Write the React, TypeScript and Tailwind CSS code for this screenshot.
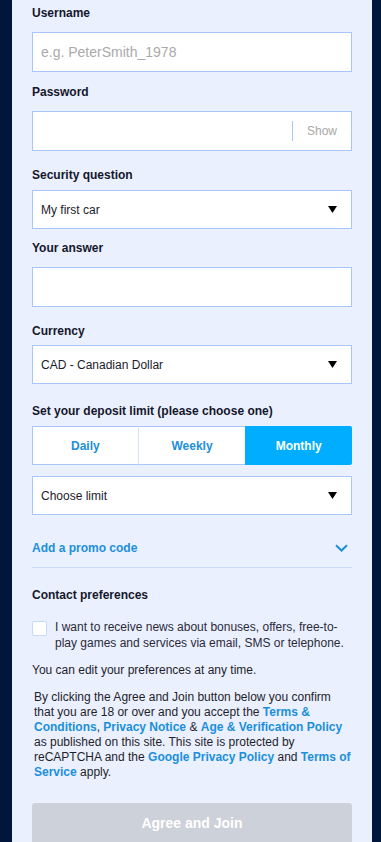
import React from "react";

const Arrow = () => (
  <svg width="9" height="7" viewBox="0 0 9 7" className="shrink-0">
    <polygon points="0,0 9,0 4.5,7" fill="#000" />
  </svg>
);

const Label = ({ children, className = "" }: { children: React.ReactNode; className?: string }) => (
  <div className={`text-[12px] leading-[14px] font-bold text-[#15172b] ${className}`}>{children}</div>
);

const Select = ({ value, className = "" }: { value: string; className?: string }) => (
  <div
    className={`h-[39px] shrink-0 bg-white border border-[#a9c6fb] flex items-center justify-between pl-[8px] pr-[14px] text-[12px] text-[#1b1b2a] ${className}`}
  >
    <span>{value}</span>
    <Arrow />
  </div>
);

const L = ({ children }: { children: React.ReactNode }) => (
  <span className="font-bold text-[#1b8fdb]">{children}</span>
);

export default function App() {
  return (
    <div
      className="h-[842px] w-[381px] overflow-hidden bg-[#00163b]"
      style={{ fontFamily: '"Liberation Sans", Arial, sans-serif' }}
    >
      <div className="ml-[12px] w-[360px] h-full bg-[#eaf0fe] px-[20px] flex flex-col">
        <Label className="mt-[6px]">Username</Label>
        <div className="mt-[12px] h-[40px] shrink-0 bg-white border border-[#a9c6fb] flex items-center pl-[8px] text-[14px] text-[#aaaaaa]">
          e.g. PeterSmith_1978
        </div>

        <Label className="mt-[13px]">Password</Label>
        <div className="mt-[12px] h-[40px] shrink-0 bg-white border border-[#a9c6fb] flex items-center justify-end pr-[14px]">
          <div className="w-px h-[20px] bg-[#a9c6fb] mr-[14px]" />
          <span className="text-[12px] text-[#a8a8a8]">Show</span>
        </div>

        <Label className="mt-[17px]">Security question</Label>
        <Select value="My first car" className="mt-[8px]" />

        <Label className="mt-[12px]">Your answer</Label>
        <div className="mt-[12px] h-[40px] shrink-0 bg-white border border-[#a9c6fb]" />

        <Label className="mt-[17px]">Currency</Label>
        <Select value="CAD - Canadian Dollar" className="mt-[7px]" />

        <Label className="mt-[20px]">Set your deposit limit (please choose one)</Label>
        <div className="mt-[8px] h-[39px] shrink-0 grid grid-cols-3 text-[12px] font-bold">
          <div className="bg-white border border-[#a9c6fb] border-r-[#d6e3fb] flex items-center justify-center text-[#1b8fdb]">
            Daily
          </div>
          <div className="bg-white border-y border-[#a9c6fb] flex items-center justify-center text-[#1b8fdb]">
            Weekly
          </div>
          <div className="bg-[#00adff] rounded-r-[2px] flex items-center justify-center text-white">
            Monthly
          </div>
        </div>

        <Select value="Choose limit" className="mt-[11px]" />

        <div className="mt-[13px] h-[40px] shrink-0 border-b border-[#c9dbf7] flex items-center justify-between pr-[4px]">
          <span className="text-[12px] font-bold text-[#1b8fdb]">Add a promo code</span>
          <svg width="13" height="8" viewBox="0 0 13 8">
            <polyline points="1,1.2 6.5,6.5 12,1.2" fill="none" stroke="#1b8fdb" strokeWidth="2" />
          </svg>
        </div>

        <Label className="mt-[20px]">Contact preferences</Label>

        <div className="mt-[18px] flex items-start gap-[8px]">
          <div className="w-[15px] h-[15px] mt-[1px] bg-white border border-[#c8d9f7] rounded-[2px] shrink-0" />
          <div className="text-[12px] leading-[15.5px] text-[#2a2a3a] whitespace-nowrap">
            I want to receive news about bonuses, offers, free-to-
            <br />
            play games and services via email, SMS or telephone.
          </div>
        </div>

        <div className="mt-[12px] text-[12px] leading-[15px] text-[#1f1f2a]">
          You can edit your preferences at any time.
        </div>

        <div className="mt-[12px] pl-[2px] text-[12px] leading-[15px] text-[#1f1f2a] whitespace-nowrap">
          By clicking the Agree and Join button below you confirm
          <br />
          that you are 18 or over and you accept the <L>Terms &amp;</L>
          <br />
          <L>Conditions</L>, <L>Privacy Notice</L> &amp; <L>Age &amp; Verification Policy</L>
          <br />
          as published on this site. This site is protected by
          <br />
          reCAPTCHA and the <L>Google Privacy Policy</L> and <L>Terms of</L>
          <br />
          <L>Service</L> apply.
        </div>

        <div className="mt-[23px] h-[40px] shrink-0 bg-[#cdd1d9] rounded-t-[3px] flex items-center justify-center text-[14px] font-bold text-white">
          Agree and Join
        </div>
      </div>
    </div>
  );
}
